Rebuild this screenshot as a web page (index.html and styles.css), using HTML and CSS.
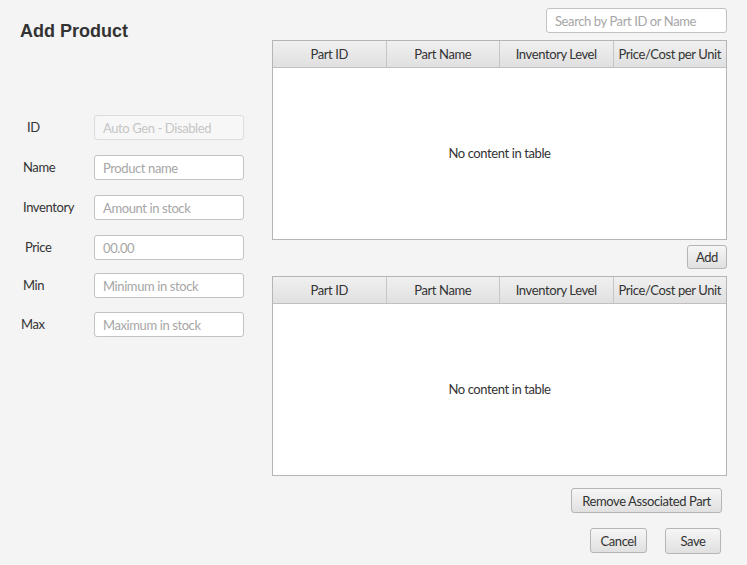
FILE: index.html
```html
<!DOCTYPE html>
<html>
<head>
<meta charset="utf-8">
<link rel="stylesheet" href="styles.css">
</head>
<body>
<div class="window">
  <div class="left">
    <h1 class="title">Add Product</h1>
    <div class="form">
      <div class="row"><label class="lbl l-id">ID</label><input class="field" disabled placeholder="Auto Gen - Disabled"></div>
      <div class="row"><label class="lbl l-name">Name</label><input class="field" placeholder="Product name"></div>
      <div class="row"><label class="lbl l-inv">Inventory</label><input class="field" placeholder="Amount in stock"></div>
      <div class="row"><label class="lbl l-price">Price</label><input class="field" placeholder="00.00"></div>
      <div class="row r-min"><label class="lbl l-min">Min</label><input class="field" placeholder="Minimum in stock"></div>
      <div class="row r-max"><label class="lbl l-max">Max</label><input class="field" placeholder="Maximum in stock"></div>
    </div>
  </div>
  <div class="right">
    <div class="search-row"><input class="field search" placeholder="Search by Part ID or Name"></div>
    <div class="table t1">
      <div class="thead"><div class="th">Part ID</div><div class="th">Part Name</div><div class="th">Inventory Level</div><div class="th">Price/Cost per Unit</div></div>
      <div class="tbody">No content in table</div>
    </div>
    <div class="add-row"><button class="btn add">Add</button></div>
    <div class="table t2">
      <div class="thead"><div class="th">Part ID</div><div class="th">Part Name</div><div class="th">Inventory Level</div><div class="th">Price/Cost per Unit</div></div>
      <div class="tbody">No content in table</div>
    </div>
    <div class="remove-row"><button class="btn remove">Remove Associated Part</button></div>
    <div class="action-row"><button class="btn cancel">Cancel</button><button class="btn save">Save</button></div>
  </div>
</div>
</body>
</html>
```
FILE: styles.css
```css
* { box-sizing: border-box; }
html, body { margin: 0; padding: 0; }
body {
  background: #f4f4f4;
  width: 747px;
  height: 565px;
  overflow: hidden;
  font-family: "Lato", "Open Sans", sans-serif;
  font-size: 13px;
  letter-spacing: -0.4px;
  color: #333;
}
.window { display: flex; height: 565px; }
.left { width: 272px; flex: none; }
.right { width: 455px; flex: none; display: flex; flex-direction: column; }
.title {
  font-family: "Liberation Sans", Arial, sans-serif;
  font-weight: bold;
  font-size: 18px;
  letter-spacing: 0;
  color: #333;
  margin: 0;
  padding: 20px 0 0 20px;
  line-height: 22px;
}
.form { display: flex; flex-direction: column; margin-top: 73px; }
.row { display: flex; align-items: center; height: 25px; margin-bottom: 15px; }
.row.r-min { margin-top: -2px; }
.row.r-max { margin-top: -1px; }
.lbl { width: 94px; flex: none; color: #333; font-size: 13px; padding-bottom: 1px; }
.l-id { padding-left: 27px; }
.l-name { padding-left: 23px; }
.l-inv { padding-left: 23px; }
.l-price { padding-left: 25px; }
.l-min { padding-left: 23px; }
.l-max { padding-left: 21px; }
.field {
  width: 150px;
  height: 25px;
  border: 1px solid #c2c2c2;
  border-radius: 3px;
  background: #fff;
  font-family: inherit;
  font-size: 13px;
  letter-spacing: -0.4px;
  padding: 0 8px;
  color: #333;
  outline: none;
}
.field::placeholder { color: #a6a6a6; }
.field:disabled { background: #f7f7f7; border-color: #dcdcdc; }
.field:disabled::placeholder { color: #c6c6c6; }
.search-row { display: flex; justify-content: flex-end; padding-top: 8px; height: 40px; }
.search { width: 181px; }
.table { border: 1px solid #b5b5b5; background: #fff; height: 200px; display: flex; flex-direction: column; }
.thead { display: flex; height: 27px; flex: none; background: linear-gradient(#f0f0f0, #e0e0e0); border-bottom: 1px solid #c0c0c0; }
.th { flex: 1; display: flex; align-items: center; justify-content: center; border-right: 1px solid #c6c6c6; color: #333; font-size: 13px; white-space: nowrap; }
.th:last-child { border-right: none; }
.tbody { flex: 1; display: flex; align-items: center; justify-content: center; color: #333; padding-bottom: 2px; }
.btn {
  font-family: inherit;
  font-size: 13px;
  letter-spacing: -0.4px;
  color: #333;
  border: 1px solid #b5b5b5;
  border-radius: 3px;
  background: linear-gradient(#f6f6f6, #e0e0e0);
  height: 24px;
  padding: 0 8px;
}
.add-row { display: flex; justify-content: flex-end; margin-top: 5px; height: 31px; }
.add { width: 40px; padding: 0; }
.remove-row { display: flex; justify-content: flex-end; padding-right: 5px; margin-top: 12px; }
.remove { width: 151px; padding: 0; height: 25px; }
.action-row { display: flex; justify-content: flex-end; gap: 18px; padding-right: 6px; margin-top: 15px; }
.cancel { width: 57px; padding: 0; height: 25px; }
.save { width: 56px; padding: 0; height: 26px; }
```
